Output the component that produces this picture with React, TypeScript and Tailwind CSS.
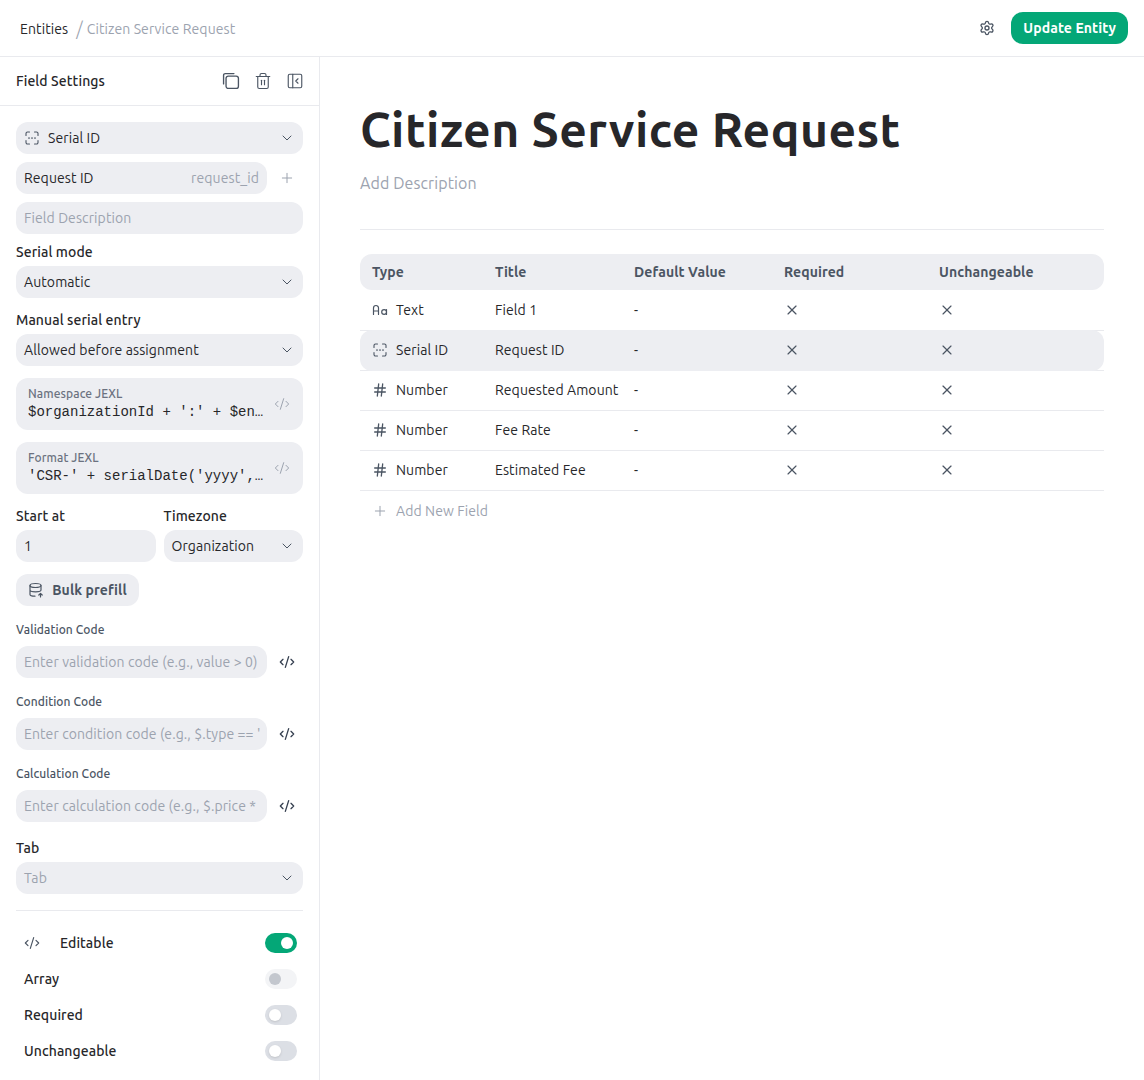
import { ChevronDown, CodeXml, Hash, PanelLeftClose, Plus, Settings, Trash2, X } from "lucide-react";

function SerialIcon({ className = "" }: { className?: string }) {
  return (
    <svg viewBox="0 0 16 16" fill="none" stroke="currentColor" strokeWidth="1.1" strokeLinecap="round" className={className}>
      <path d="M2 5.5V3.5A1.5 1.5 0 0 1 3.5 2H5.5M10.5 2h2A1.5 1.5 0 0 1 14 3.5v2M14 10.5v2a1.5 1.5 0 0 1-1.5 1.5h-2M5.5 14h-2A1.5 1.5 0 0 1 2 12.5v-2" />
      <path d="M5 8h.01M8 8h.01M11 8h.01" strokeWidth="1.7" />
    </svg>
  );
}

function TextIcon({ className = "" }: { className?: string }) {
  return (
    <svg viewBox="0 0 16 16" fill="none" stroke="currentColor" strokeWidth="1.2" strokeLinecap="round" strokeLinejoin="round" className={className}>
      <path d="M1.5 12.5V6a2.5 2.5 0 0 1 5 0v6.5M1.5 9h5" />
      <path d="M14.5 7.5v5M14.5 10a2.4 2.4 0 1 1-4.8 0 2.4 2.4 0 0 1 4.8 0Z" />
    </svg>
  );
}

function CopyIcon({ className = "" }: { className?: string }) {
  return (
    <svg viewBox="0 0 16 16" fill="none" stroke="currentColor" strokeWidth="1.2" strokeLinecap="round" className={className}>
      <rect x="3.6" y="3.6" width="11" height="11" rx="2" />
      <path d="M1.4 10.6V3A1.6 1.6 0 0 1 3 1.4h7.6" />
    </svg>
  );
}

function PrefillIcon({ className = "" }: { className?: string }) {
  return (
    <svg viewBox="0 0 16 16" fill="none" stroke="currentColor" strokeWidth="1.2" strokeLinecap="round" strokeLinejoin="round" className={className}>
      <ellipse cx="7.5" cy="3.5" rx="5.5" ry="2" />
      <path d="M2 3.5v9c0 1 1.5 1.7 5 1.7M13 3.5V8M2 8c0 1 2 1.8 5.5 1.8S13 9 13 8" />
      <path d="M12.5 15v-3.5M10.8 13l1.7-1.7 1.7 1.7" />
    </svg>
  );
}

function Select({ label, muted }: { label: string; muted?: boolean }) {
  return (
    <div className="h-8 flex items-center justify-between rounded-xl bg-[#edeef2] pl-2 pr-2">
      <span className={muted ? "text-sm text-[#9ca3af]" : "text-sm text-[#27272a]"}>{label}</span>
      <ChevronDown size={16} strokeWidth={1.5} className="text-[#4b5563]" />
    </div>
  );
}

function JexlBox({ label, value }: { label: string; value: string }) {
  return (
    <div className="h-[52px] flex items-center rounded-xl bg-[#edeef2] pl-3 pr-[13px]">
      <div className="flex-1 min-w-0">
        <div className="text-xs leading-4 font-medium text-[#6b7280]">{label}</div>
        <div className="truncate text-sm leading-5 tracking-normal text-[#27272a] font-['Liberation_Mono',monospace]">{value}</div>
      </div>
      <CodeXml size={16} strokeWidth={1.5} className="ml-2 text-[#9ca3af]" />
    </div>
  );
}

function CodeField({ label, placeholder }: { label: string; placeholder: string }) {
  return (
    <div>
      <div className="h-[18px] pt-px text-xs leading-[18px] font-medium text-[#4b5563]">{label}</div>
      <div className="mt-2 flex items-center">
        <div className="h-8 w-[251px] flex items-center overflow-hidden whitespace-nowrap rounded-xl bg-[#edeef2] px-2 text-sm text-[#9ca3af]">
          {placeholder}
        </div>
        <CodeXml size={16} className="ml-3 text-[#374151]" />
      </div>
    </div>
  );
}

function Toggle({ state }: { state: "on" | "off" | "disabled" }) {
  if (state === "on")
    return (
      <div className="h-5 w-8 flex items-center justify-end rounded-full bg-[#04a777] px-1">
        <div className="h-3 w-3 rounded-full bg-white" />
      </div>
    );
  if (state === "disabled")
    return (
      <div className="h-5 w-8 flex items-center rounded-full bg-[#f3f4f6] px-1">
        <div className="h-3 w-3 rounded-full bg-[#c3c7ce]" />
      </div>
    );
  return (
    <div className="h-5 w-8 flex items-center rounded-full bg-[#dcdfe5] px-1">
      <div className="h-3 w-3 rounded-full bg-white shadow-sm" />
    </div>
  );
}

const fields = [
  { type: "Text", title: "Field 1", icon: <TextIcon className="h-4 w-4" /> },
  { type: "Serial ID", title: "Request ID", icon: <SerialIcon className="h-4 w-4" />, selected: true },
  { type: "Number", title: "Requested Amount", icon: <Hash size={16} strokeWidth={2} /> },
  { type: "Number", title: "Fee Rate", icon: <Hash size={16} strokeWidth={2} /> },
  { type: "Number", title: "Estimated Fee", icon: <Hash size={16} strokeWidth={2} /> },
];

const columns = "grid grid-cols-[123px_139px_150px_155px_1fr] items-center px-3";

export default function App() {
  return (
    <div className="h-[1080px] w-[1144px] overflow-hidden bg-white text-[#27272a] tracking-[0.006em] font-['Ubuntu','Noto_Sans',sans-serif]">
      <header className="h-[57px] flex items-center justify-between border-b border-[#e9eaee] pl-5 pr-4">
        <div className="flex items-center pt-0.5 text-sm">
          <span className="text-[#27272a]">Entities</span>
          <span className="ml-2 mr-1 text-lg font-light leading-none text-[#9ca3af]">/</span>
          <span className="text-[#9ca3af]">Citizen Service Request</span>
        </div>
        <div className="flex items-center gap-4">
          <Settings size={16} className="text-[#4b5563]" />
          <button className="h-8 rounded-xl bg-[#04a777] px-3 text-sm font-semibold text-white">Update Entity</button>
        </div>
      </header>

      <div className="flex h-[1023px]">
        <aside className="w-[320px] shrink-0 border-r border-[#e9eaee]">
          <div className="h-[49px] flex items-center justify-between border-b border-[#e9eaee] pl-4 pr-[15px]">
            <span className="text-sm font-medium">Field Settings</span>
            <div className="flex items-center gap-[14px] text-[#4b5563]">
              <CopyIcon className="h-[18px] w-[18px]" />
              <Trash2 size={18} strokeWidth={1.5} />
              <PanelLeftClose size={18} strokeWidth={1.5} />
            </div>
          </div>

          <div className="flex flex-col px-4 pt-4">
            <div className="h-8 flex items-center justify-between rounded-xl bg-[#edeef2] pl-2 pr-2">
              <div className="flex items-center gap-2 text-sm">
                <SerialIcon className="h-4 w-4 text-[#4b5563]" />
                Serial ID
              </div>
              <ChevronDown size={16} strokeWidth={1.5} className="text-[#4b5563]" />
            </div>
            <div className="mt-2 flex items-center">
              <div className="h-8 w-[251px] flex items-center justify-between rounded-xl bg-[#edeef2] px-2 text-sm">
                <span>Request ID</span>
                <span className="text-[#9ca3af]">request_id</span>
              </div>
              <Plus size={16} strokeWidth={1.5} className="ml-3 text-[#9ca3af]" />
            </div>
            <div className="mt-2 h-8 flex items-center rounded-xl bg-[#edeef2] px-2 text-sm text-[#9ca3af]">Field Description</div>

            <div className="mt-2 mb-1 h-5 text-sm leading-5 font-medium">Serial mode</div>
            <Select label="Automatic" />
            <div className="mt-3 mb-1 h-5 text-sm leading-5 font-medium">Manual serial entry</div>
            <Select label="Allowed before assignment" />

            <div className="mt-3 flex flex-col gap-3">
              <JexlBox label="Namespace JEXL" value="$organizationId + ':' + $entityId" />
              <JexlBox label="Format JEXL" value="'CSR-' + serialDate('yyyy', $now)" />
            </div>

            <div className="mt-3 grid grid-cols-2 gap-2">
              <div>
                <div className="mb-1 h-5 text-sm leading-5 font-medium">Start at</div>
                <div className="h-8 flex items-center rounded-xl bg-[#edeef2] px-2 text-sm">1</div>
              </div>
              <div>
                <div className="mb-1 h-5 text-sm leading-5 font-medium">Timezone</div>
                <Select label="Organization" />
              </div>
            </div>

            <button className="mt-3 h-8 w-[123px] flex items-center justify-center gap-2 rounded-xl bg-[#edeef2] text-sm font-semibold text-[#4b5563]">
              <PrefillIcon className="h-4 w-4" />
              Bulk prefill
            </button>

            <div className="mt-[14px] flex flex-col gap-[14px]">
              <CodeField label="Validation Code" placeholder="Enter validation code (e.g., value > 0)" />
              <CodeField label="Condition Code" placeholder="Enter condition code (e.g., $.type == '" />
              <CodeField label="Calculation Code" placeholder="Enter calculation code (e.g., $.price *" />
            </div>

            <div className="mt-4 mb-1 h-5 text-sm leading-5 font-medium">Tab</div>
            <Select label="Tab" muted />

            <div className="mt-4 border-t border-[#e9eaee] pt-[22px] pl-2 pr-1.5">
              <div className="h-5 flex items-center justify-between text-sm font-medium">
                <div className="flex items-center">
                  <CodeXml size={16} strokeWidth={1.75} className="text-[#4b5563]" />
                  <span className="ml-5">Editable</span>
                </div>
                <Toggle state="on" />
              </div>
              <div className="mt-4 h-5 flex items-center justify-between text-sm font-medium">
                Array
                <Toggle state="disabled" />
              </div>
              <div className="mt-4 h-5 flex items-center justify-between text-sm font-medium">
                Required
                <Toggle state="off" />
              </div>
              <div className="mt-4 h-5 flex items-center justify-between text-sm font-medium">
                Unchangeable
                <Toggle state="off" />
              </div>
            </div>
          </div>
        </aside>

        <main className="flex-1 pl-10 pr-10">
          <h1 className="mt-[42px] text-5xl leading-[60px] font-bold tracking-[0.009em] text-[#27272a]">Citizen Service Request</h1>
          <div className="mt-3 h-6 text-base leading-6 text-[#9ca3af]">Add Description</div>
          <div className="mt-[34px] border-t border-[#e9eaee]" />

          <div className="mt-6">
            <div className={`${columns} h-9 rounded-xl bg-[#edeef2] text-sm font-semibold text-[#4b5563]`}>
              <span>Type</span>
              <span>Title</span>
              <span>Default Value</span>
              <span>Required</span>
              <span>Unchangeable</span>
            </div>
            <div className="pt-px">
              {fields.map((f) => (
                <div key={f.title} className="flow-root h-10 border-b border-[#e9eaee]">
                  <div className={`${columns} ${f.selected ? "relative -mt-px h-[41px] rounded-xl bg-[#edeef2] pb-px" : "h-[38px]"} text-sm`}>
                    <div className="flex items-center gap-2">
                      <span className="text-[#4b5563]">{f.icon}</span>
                      {f.type}
                    </div>
                    <span>{f.title}</span>
                    <span>-</span>
                    <X size={16} strokeWidth={1.75} className="text-[#4b5563]" />
                    <X size={16} strokeWidth={1.75} className="text-[#4b5563]" />
                  </div>
                </div>
              ))}
            </div>
            <div className="h-10 flex items-center gap-2 px-3 text-sm text-[#9ca3af]">
              <Plus size={16} strokeWidth={1.5} />
              Add New Field
            </div>
          </div>
        </main>
      </div>
    </div>
  );
}
